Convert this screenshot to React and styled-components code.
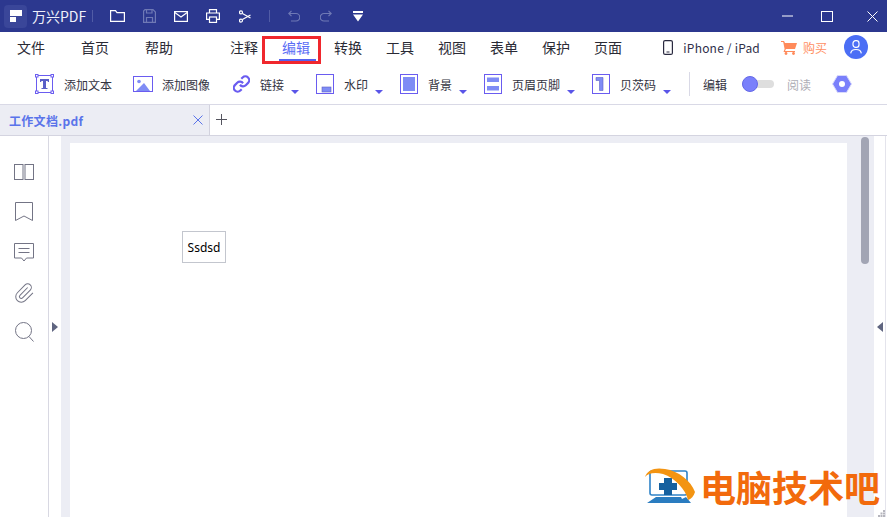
import React from "react";
import styled, { createGlobalStyle } from "styled-components";

const Global = createGlobalStyle`
  html, body {
    margin: 0;
    padding: 0;
    background: #fff;
    overflow: hidden;
  }
  * {
    box-sizing: border-box;
  }
`;

const Wrap = styled.div`
  position: relative;
  width: 887px;
  height: 517px;
  overflow: hidden;
  display: flex;
  flex-direction: column;
  font-family: "Noto Sans CJK SC", "Noto Sans", sans-serif;
  color: #2a2a35;
`;

const TitleBar = styled.div`
  display: flex;
  align-items: center;
  height: 32px;
  flex: none;
  background: #2c388f;
  color: #fff;
`;

const LogoTile = styled.div`
  display: flex;
  align-items: center;
  justify-content: center;
  width: 23px;
  height: 23px;
  margin-left: 4px;
  border-radius: 4px;
  background: #3a4699;
`;

const AppName = styled.div`
  margin-left: 5px;
  width: 55px;
  font-size: 14px;
  line-height: 32px;
  color: #eef0fa;
  white-space: nowrap;
`;

const TitleDivider = styled.div`
  width: 1px;
  height: 12px;
  background: #515ca6;
  margin-left: ${(props) => props.left}px;
`;

const TitleIcon = styled.svg`
  display: block;
  flex: none;
  margin-left: ${(props) => props.left}px;
  fill: none;
  stroke: ${(props) => (props.dim ? "#6f79b5" : "#fff")};
  stroke-width: 1.2;
`;

const WindowButtons = styled.div`
  display: flex;
  align-items: center;
  margin-left: auto;
  margin-right: 9px;
  gap: 28px;
`;

const CloseGlyph = styled.svg`
  margin-left: 6px;
`;

const MenuBar = styled.div`
  display: flex;
  align-items: center;
  height: 36px;
  flex: none;
  padding: 0 0 6px 17px;
  background: #fff;
`;

const MenuGroup = styled.div`
  display: flex;
  gap: ${(props) => props.gap}px;
  margin-left: ${(props) => props.left || 0}px;
`;

const MenuItem = styled.div`
  position: relative;
  width: 28px;
  font-size: 14px;
  line-height: 34px;
  white-space: nowrap;
  color: ${(props) => (props.active ? "#5b6cf5" : "#2a2a35")};
  ${(props) =>
    props.active &&
    `&::after {
      content: "";
      position: absolute;
      left: -3px;
      right: -6px;
      bottom: 3px;
      height: 2px;
      background: #5461ef;
    }`}
`;

const RedBox = styled.div`
  position: absolute;
  left: 262px;
  top: 36px;
  width: 59px;
  height: 28px;
  border: 3px solid #f0272d;
`;

const MenuRight = styled.div`
  display: flex;
  align-items: center;
  margin-left: auto;
  margin-right: 19px;
`;

const DeviceText = styled.div`
  margin-left: 10px;
  font-size: 12px;
  letter-spacing: 0.2px;
  color: #30304a;
  white-space: nowrap;
`;

const CartGlyph = styled.svg`
  margin-left: 21px;
`;

const BuyText = styled.div`
  margin-left: 6px;
  font-size: 12px;
  color: #ff8f63;
`;

const Avatar = styled.div`
  display: flex;
  align-items: center;
  justify-content: center;
  width: 24px;
  height: 24px;
  margin-left: 17px;
  border-radius: 50%;
  background: #4b6ef5;
`;

const ToolBar = styled.div`
  display: flex;
  align-items: center;
  height: 37px;
  flex: none;
  padding: 0 0 4px 35px;
  border-bottom: 1px solid #d9d9e6;
  background: #fff;
`;

const Tool = styled.div`
  position: relative;
  display: flex;
  align-items: center;
  width: ${(props) => props.width}px;
  height: 20px;
  flex: none;
  margin-left: ${(props) => props.left || 0}px;
`;

const ToolLabel = styled.div`
  margin-left: ${(props) => props.gap}px;
  font-size: 12px;
  color: ${(props) => props.color || "#33333f"};
  white-space: nowrap;
`;

const Caret = styled.div`
  position: absolute;
  right: 0;
  bottom: 0;
  width: 0;
  height: 0;
  border-left: 4px solid transparent;
  border-right: 4px solid transparent;
  border-top: 4px solid #5a55e8;
`;

const ToolDivider = styled.div`
  width: 1px;
  height: 24px;
  margin-left: 18px;
  background: #d9d9e6;
`;

const Toggle = styled.div`
  position: relative;
  width: 32px;
  height: 8px;
  margin-left: 15px;
  border-radius: 4px;
  background: #dedede;
`;

const ToggleKnob = styled.div`
  position: absolute;
  left: 0;
  top: -4px;
  width: 16px;
  height: 16px;
  border-radius: 50%;
  background: #7a80fb;
  border: 1px solid #6468e8;
`;

const HexGlyph = styled.svg`
  margin-left: 21px;
`;

const ToolGlyph = styled.svg`
  display: block;
  flex: none;
  fill: none;
`;

const TabBar = styled.div`
  display: flex;
  height: 31px;
  flex: none;
  border-bottom: 1px solid #d4d4e0;
  background: #fff;
`;

const Tab = styled.div`
  display: flex;
  align-items: center;
  width: 210px;
  padding-left: 9px;
  background: #ecedf4;
  border-right: 1px solid #d2d2de;
`;

const TabTitle = styled.div`
  flex: 1;
  font-size: 12px;
  letter-spacing: 0.3px;
  font-weight: 700;
  color: #5a74ea;
`;

const TabClose = styled.svg`
  margin-right: 6px;
`;

const TabPlus = styled.svg`
  margin: 9px 0 0 6px;
`;

const Main = styled.div`
  flex: 1;
  display: flex;
  min-height: 0;
`;

const SideBar = styled.div`
  display: flex;
  flex-direction: column;
  align-items: center;
  width: 49px;
  flex: none;
  padding-top: 28px;
  gap: 22px;
  border-right: 1px solid #d8d8e2;
`;

const SideIcon = styled.svg`
  display: block;
  fill: none;
  stroke: #737485;
  stroke-width: ${(props) => props.weight || 1};
  margin-top: ${(props) => props.pull || 0}px;
`;

const Handle = styled.div`
  display: flex;
  align-items: center;
  justify-content: center;
  width: ${(props) => props.width}px;
  flex: none;
  background: #fff;
`;

const Arrow = styled.div`
  width: 0;
  height: 0;
  border-top: 5px solid transparent;
  border-bottom: 5px solid transparent;
  ${(props) =>
    props.dir === "left"
      ? "border-right: 6px solid #5f6580;"
      : "border-left: 6px solid #5f6580;"}
`;

const Viewer = styled.div`
  flex: 1;
  display: flex;
  padding: 7px 0 0 9px;
  background: #ecedf4;
  position: relative;
`;

const Page = styled.div`
  width: 777px;
  background: #fff;
  padding: 88px 0 0 112px;
`;

const TextField = styled.div`
  display: flex;
  align-items: center;
  justify-content: center;
  width: 44px;
  height: 32px;
  border: 1px solid #c3c6ce;
  font-family: "Noto Sans", sans-serif;
  font-size: 12px;
  color: #000;
`;

const ScrollThumb = styled.div`
  position: absolute;
  left: 800px;
  top: 1px;
  width: 8px;
  height: 127px;
  border-radius: 4px;
  background: #a2a5b4;
`;

const RightEdge = styled.div`
  width: 2px;
  flex: none;
  border-left: 1px solid #e4e4ec;
  background: #fff;
`;

const Watermark = styled.div`
  position: absolute;
  left: 645px;
  top: 464px;
  display: flex;
  align-items: center;
  gap: 5px;
`;

const WatermarkText = styled.div`
  font-family: "Noto Sans CJK SC", sans-serif;
  font-size: 36px;
  line-height: 44px;
  font-weight: 700;
  color: #f26a0c;
  white-space: nowrap;
`;

const Grip = styled.svg`
  position: absolute;
  right: 2px;
  bottom: 0;
`;

const icon = "#6a5cf0";
const fillBlue = "#7f8cf5";

export default function App() {
  return (
    <Wrap>
      <Global />
      <TitleBar>
        <LogoTile>
          <svg width="12" height="12" viewBox="0 0 12 12">
            <path d="M0 0H12V6H0Z" fill="#fff" />
            <path d="M0 7H6V12H0Z" fill="#fff" />
          </svg>
        </LogoTile>
        <AppName>万兴PDF</AppName>
        <TitleDivider left={5} />
        <TitleIcon left={17} width="15" height="12" viewBox="0 0 15 12">
          <path d="M.6 11.4V.6H5.5L7 2.6H14.4V11.4Z" />
        </TitleIcon>
        <TitleIcon left={18} dim width="13" height="14" viewBox="0 0 13 14">
          <path d="M.6 2 2 .6H10L12.4 3V13.4H.6Z" />
          <path d="M3.5 .8V4H9V.8M3.5 13V8.5H9.5V13" />
        </TitleIcon>
        <TitleIcon left={18} width="14" height="11" viewBox="0 0 14 11">
          <rect x=".6" y=".6" width="12.8" height="9.8" />
          <path d="M.8 1.5 7 6l6.2-4.5" />
        </TitleIcon>
        <TitleIcon left={18} width="14" height="14" viewBox="0 0 14 14">
          <path d="M3.5 4V.6H10.5V4" />
          <path d="M3 10.4H.6V4H13.4V10.4H11" />
          <rect x="3.5" y="8" width="7" height="5.4" />
        </TitleIcon>
        <TitleIcon left={19} width="12" height="13" viewBox="0 0 12 13">
          <circle cx="2" cy="2.4" r="1.5" />
          <circle cx="2" cy="10.6" r="1.5" />
          <path d="M3.4 3.4 11.5 8M3.4 9.6 11.5 5" />
        </TitleIcon>
        <TitleDivider left={18} />
        <TitleIcon left={18} dim width="12" height="12" viewBox="0 0 12 12">
          <path d="M3.5 .8.8 3.5l2.7 2.7M1 3.5H8a3.4 3.4 0 0 1 0 7.5H3" />
        </TitleIcon>
        <TitleIcon left={20} dim width="12" height="12" viewBox="0 0 12 12">
          <path d="M8.5 .8l2.7 2.7-2.7 2.7M11 3.5H4a3.4 3.4 0 0 0 0 7.5h5" />
        </TitleIcon>
        <TitleIcon left={21} width="10" height="11" viewBox="0 0 10 11">
          <path d="M0 0H10V2H0Z M0 3.5H10L5 10.5Z" fill="#fff" stroke="none" />
        </TitleIcon>
        <WindowButtons>
          <svg width="11" height="2" viewBox="0 0 11 2">
            <path d="M0 1H11" stroke="#fff" strokeWidth="1" />
          </svg>
          <svg width="12" height="11" viewBox="0 0 12 11" fill="none">
            <rect x=".5" y=".5" width="11" height="10" stroke="#fff" />
          </svg>
          <CloseGlyph width="11" height="11" viewBox="0 0 11 11">
            <path d="M.5.5l10 10M10.5.5l-10 10" stroke="#fff" strokeWidth="1" />
          </CloseGlyph>
        </WindowButtons>
      </TitleBar>

      <MenuBar>
        <MenuGroup gap={36}>
          <MenuItem>文件</MenuItem>
          <MenuItem>首页</MenuItem>
          <MenuItem>帮助</MenuItem>
        </MenuGroup>
        <MenuGroup gap={24} left={57}>
          <MenuItem>注释</MenuItem>
          <MenuItem active>编辑</MenuItem>
          <MenuItem>转换</MenuItem>
          <MenuItem>工具</MenuItem>
          <MenuItem>视图</MenuItem>
          <MenuItem>表单</MenuItem>
          <MenuItem>保护</MenuItem>
          <MenuItem>页面</MenuItem>
        </MenuGroup>
        <MenuRight>
          <svg width="10" height="15" viewBox="0 0 10 15" fill="none">
            <rect x=".6" y=".6" width="8.8" height="13.8" rx="1.5" stroke="#2a2a40" strokeWidth="1.2" />
            <path d="M3.5 12H6.5" stroke="#2a2a40" />
          </svg>
          <DeviceText>iPhone / iPad</DeviceText>
          <CartGlyph width="16" height="15" viewBox="0 0 16 15">
            <path d="M0 1H3L4 3H16L14 9H5L4 11H14V12H2.5L3.6 9 2.2 2H0Z" fill="#ff8a5a" />
            <circle cx="5" cy="13.5" r="1.4" fill="#ff8a5a" />
            <circle cx="12.5" cy="13.5" r="1.4" fill="#ff8a5a" />
          </CartGlyph>
          <BuyText>购买</BuyText>
          <Avatar>
            <svg width="12" height="14" viewBox="0 0 12 14" fill="none">
              <rect x="3" y=".7" width="6" height="6.6" rx="2.6" stroke="#fff" strokeWidth="1.2" />
              <path d="M.7 13.4C1 10.5 3 9.5 6 9.5s5 1 5.3 3.9" stroke="#fff" strokeWidth="1.2" />
            </svg>
          </Avatar>
        </MenuRight>
      </MenuBar>
      <RedBox />

      <ToolBar>
        <Tool width={98}>
          <ToolGlyph width="19" height="20" viewBox="0 0 19 20">
            <rect x="1.5" y="1.5" width="16" height="17" stroke={icon} />
            <rect x=".5" y=".5" width="2.5" height="2.5" fill="#fff" stroke={icon} />
            <rect x="16" y=".5" width="2.5" height="2.5" fill="#fff" stroke={icon} />
            <rect x=".5" y="17" width="2.5" height="2.5" fill="#fff" stroke={icon} />
            <rect x="16" y="17" width="2.5" height="2.5" fill="#fff" stroke={icon} />
            <path d="M5 5H14V8H13L12.5 7H11V14H12.5V15H6.5V14H8V7H6.5L6 8H5Z" fill="#5a5fc8" />
          </ToolGlyph>
          <ToolLabel gap={10}>添加文本</ToolLabel>
        </Tool>
        <Tool width={100}>
          <ToolGlyph width="20" height="16" viewBox="0 0 20 16">
            <rect x=".5" y=".5" width="19" height="15" stroke={icon} />
            <circle cx="6" cy="5.5" r="1.8" fill={fillBlue} />
            <path d="M3 15 11 7l6 8Z" fill={fillBlue} />
          </ToolGlyph>
          <ToolLabel gap={9}>添加图像</ToolLabel>
        </Tool>
        <Tool width={66}>
          <ToolGlyph width="17" height="18" viewBox="1 1 22 22">
            <path d="M10 13a5 5 0 0 0 7.54.54l3-3a5 5 0 0 0-7.07-7.07l-1.72 1.71" stroke={icon} strokeWidth="2.8" />
            <path d="M14 11a5 5 0 0 0-7.54-.54l-3 3a5 5 0 0 0 7.07 7.07l1.71-1.71" stroke={icon} strokeWidth="2.8" />
          </ToolGlyph>
          <ToolLabel gap={10}>链接</ToolLabel>
          <Caret />
        </Tool>
        <Tool width={67} left={17}>
          <ToolGlyph width="18" height="20" viewBox="0 0 18 20">
            <rect x=".5" y=".5" width="17" height="19" stroke={icon} />
            <rect x="6" y="13" width="9" height="5" fill={fillBlue} stroke="#5a5fc8" strokeWidth=".6" />
          </ToolGlyph>
          <ToolLabel gap={10}>水印</ToolLabel>
          <Caret />
        </Tool>
        <Tool width={67} left={17}>
          <ToolGlyph width="18" height="20" viewBox="0 0 18 20">
            <rect x=".5" y=".5" width="17" height="19" stroke={icon} />
            <rect x="3" y="3" width="12" height="14" fill={fillBlue} />
          </ToolGlyph>
          <ToolLabel gap={10}>背景</ToolLabel>
          <Caret />
        </Tool>
        <Tool width={91} left={17}>
          <ToolGlyph width="18" height="20" viewBox="0 0 18 20">
            <rect x=".5" y=".5" width="17" height="19" stroke={icon} />
            <rect x="3" y="3.5" width="12" height="4.5" fill={fillBlue} />
            <rect x="3" y="12" width="12" height="4.5" fill={fillBlue} />
          </ToolGlyph>
          <ToolLabel gap={10}>页眉页脚</ToolLabel>
          <Caret />
        </Tool>
        <Tool width={79} left={17}>
          <ToolGlyph width="18" height="20" viewBox="0 0 18 20">
            <rect x=".5" y=".5" width="17" height="19" stroke={icon} />
            <path d="M4 3.5H11V16.5H7.5V6.5H4Z" fill={fillBlue} stroke="#5a5fc8" strokeWidth=".6" />
          </ToolGlyph>
          <ToolLabel gap={10}>贝茨码</ToolLabel>
          <Caret />
        </Tool>
        <ToolDivider />
        <ToolLabel gap={13}>编辑</ToolLabel>
        <Toggle>
          <ToggleKnob />
        </Toggle>
        <ToolLabel gap={13} color="#aeaeb6">
          阅读
        </ToolLabel>
        <HexGlyph width="20" height="20" viewBox="0 0 20 20">
          <path d="M5.5 1.5H14.5L19.5 10 14.5 18.5H5.5L.5 10Z" fill="#7a80fb" stroke="#d8d9fb" />
          <circle cx="10" cy="10" r="3" fill="#fff" />
        </HexGlyph>
      </ToolBar>

      <TabBar>
        <Tab>
          <TabTitle>工作文档.pdf</TabTitle>
          <TabClose width="10" height="10" viewBox="0 0 10 10">
            <path d="M.5.5l9 9M9.5.5l-9 9" stroke="#5a74ea" />
          </TabClose>
        </Tab>
        <TabPlus width="11" height="11" viewBox="0 0 11 11">
          <path d="M5.5 0V11M0 5.5H11" stroke="#55555f" />
        </TabPlus>
      </TabBar>

      <Main>
        <SideBar>
          <SideIcon width="20" height="16" viewBox="0 0 20 16">
            <rect x=".5" y=".5" width="8.5" height="15" />
            <rect x="11" y=".5" width="8.5" height="15" />
          </SideIcon>
          <SideIcon width="18" height="19" viewBox="0 0 18 19">
            <path d="M.5.5H17.5V18.5L9 14 .5 18.5Z" />
          </SideIcon>
          <SideIcon width="20" height="19" viewBox="0 0 20 19">
            <path d="M.5.5H19.5V15H12.5L10 18 7.5 15H.5Z" />
            <path d="M4.5 5.5H15.5M4.5 9.5H15.5" />
          </SideIcon>
          <SideIcon width="22" height="22" viewBox="0 0 24 24" weight={1.1} pull={-2}>
            <path d="m16 6-8.414 8.586a2 2 0 0 0 2.829 2.828l8.414-8.586a4 4 0 1 0-5.657-5.657l-8.379 8.551a6 6 0 1 0 8.485 8.485l8.472-8.415" />
          </SideIcon>
          <SideIcon width="19" height="20" viewBox="0 0 19 20" pull={-4}>
            <circle cx="8.5" cy="8.5" r="8" />
            <path d="M14 14.5 18.5 19.5" />
          </SideIcon>
        </SideBar>
        <Handle width={12}>
          <Arrow dir="right" />
        </Handle>
        <Viewer>
          <Page>
            <TextField>Ssdsd</TextField>
          </Page>
          <ScrollThumb />
        </Viewer>
        <Handle width={11}>
          <Arrow dir="left" />
        </Handle>
        <RightEdge />
      </Main>

      <Watermark>
        <svg width="50" height="36" viewBox="0 0 50 36">
          <rect x="5" y="3" width="37" height="24" rx="2" fill="#fff" stroke="#2f83c8" strokeWidth="1.6" />
          <path d="M2 35 11 29H36L37 31 41 29 46 35Z" fill="#2a7cc0" />
          <path d="M19 10H27V15H32V22H27V27H19V22H14V15H19Z" fill="#15609f" />
          <path d="M0 9C2 2 10-1 20 1 34 3 46 13 50 24 49 28 46 31 43 32 41 22 30 10 18 6 10 4 3 5 0 9Z" fill="#f39412" />
        </svg>
        <WatermarkText>电脑技术吧</WatermarkText>
      </Watermark>
      <Grip width="7" height="7" viewBox="0 0 7 7">
        <path d="M5 0H7V2H5ZM2.5 2.5H4.5V4.5H2.5ZM5 2.5H7V4.5H5ZM0 5H2V7H0ZM2.5 5H4.5V7H2.5ZM5 5H7V7H5Z" fill="#b5b5bd" />
      </Grip>
    </Wrap>
  );
}
